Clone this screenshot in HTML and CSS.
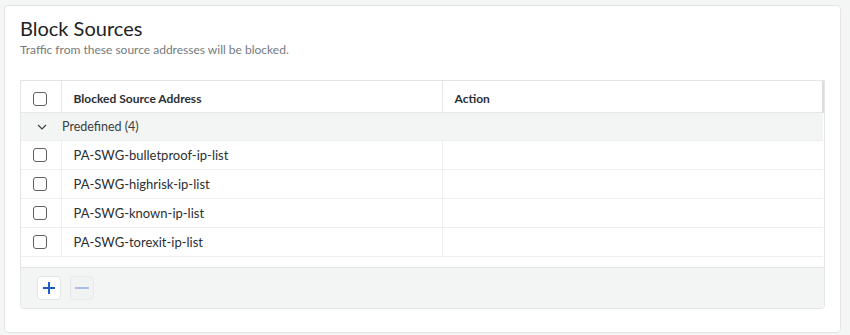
FILE: index.html
```html
<!DOCTYPE html>
<html lang="en">
<head>
  <meta charset="UTF-8" />
  <meta name="viewport" content="width=device-width, initial-scale=1.0"/>
  <title>Block Sources</title>
  <link rel="stylesheet" href="styles.css">
</head>
<body>
  <div class="card">
    <h2 class="title">Block Sources</h2>
    <div class="subtitle">Traffic from these source addresses will be blocked.</div>

    <div class="grid-wrap">
      <table class="grid">
        <colgroup>
          <col class="col-check">
          <col class="col-name">
          <col class="col-action">
        </colgroup>
        <thead>
          <tr>
            <th><span class="box"></span></th>
            <th>Blocked Source Address</th>
            <th>Action</th>
          </tr>
        </thead>
        <tbody>
          <tr class="group">
            <td class="chev">
              <svg width="10" height="6" viewBox="0 0 10 6"><path d="M1 1l4 4 4-4" fill="none" stroke="#3c4043" stroke-width="1.2"/></svg>
            </td>
            <td colspan="2" class="group-label">Predefined (4)</td>
          </tr>
          <tr>
            <td><span class="box"></span></td>
            <td class="name">PA-SWG-bulletproof-ip-list</td>
            <td></td>
          </tr>
          <tr>
            <td><span class="box"></span></td>
            <td class="name">PA-SWG-highrisk-ip-list</td>
            <td></td>
          </tr>
          <tr>
            <td><span class="box"></span></td>
            <td class="name">PA-SWG-known-ip-list</td>
            <td></td>
          </tr>
          <tr>
            <td><span class="box"></span></td>
            <td class="name">PA-SWG-torexit-ip-list</td>
            <td></td>
          </tr>
        </tbody>
      </table>
      <div class="spacer"></div>
      <div class="toolbar">
        <button class="btn add" title="Add">
          <svg width="12" height="12" viewBox="0 0 12 12"><path d="M6 0v12M0 6h12" stroke="#1f5ac8" stroke-width="2"/></svg>
        </button>
        <button class="btn remove" title="Remove" disabled>
          <svg width="14" height="12" viewBox="0 0 14 12"><path d="M0 6h14" stroke="#a9bde6" stroke-width="2"/></svg>
        </button>
      </div>
    </div>
  </div>
</body>
</html>
```

FILE: styles.css
```css
body {
  margin: 0;
  padding: 5px 9px 4px 4px;
  background: #f4f5f5;
  font-family: Lato, "Noto Sans", sans-serif;
  color: #333;
}

.card {
  background: #fff;
  border: 1px solid #e3e5e5;
  border-radius: 4px;
  padding: 10px 15px 23px 15px;
}

.title {
  margin: 0;
  font-size: 20px;
  line-height: 24px;
  font-weight: 400;
  color: #222;
}

.subtitle {
  margin-top: 2px;
  font-size: 12px;
  line-height: 16px;
  color: #767a7d;
}

.grid-wrap {
  margin-top: 22px;
  border: 1px solid #e3e5e5;
  border-radius: 0 0 4px 4px;
  overflow: hidden;
}

.grid {
  width: 100%;
  border-collapse: collapse;
  table-layout: fixed;
  font-size: 12px;
}

.col-check { width: 40px; }
.col-name { width: 381px; }

.grid th {
  text-align: left;
  font-weight: 700;
  color: #2b2f33;
  padding: 10px 12px 5px;
  line-height: 16px;
  border-bottom: 1px solid #e6e8e8;
  border-right: 1px solid #e6e8e8;
}

.grid th:last-child {
  border-right: 2px solid #dcdede;
}

.grid th:first-child,
.grid td:first-child {
  padding-left: 12px;
  padding-right: 0;
}

.grid td {
  height: 28px;
  padding: 0 12px;
  border-bottom: 1px solid #eef0f0;
  border-right: 1px solid #eef0f0;
  vertical-align: middle;
  line-height: 16px;
}

.grid td:last-child {
  border-right: none;
}

.grid .group td {
  background: #f3f4f4;
  border-right: none;
  height: 27px;
}

.chev svg {
  display: block;
  margin-left: 4px;
}

.grid .group-label {
  padding-left: 1px;
  font-size: 12.5px;
  color: #3a3e42;
}

.name {
  font-size: 13px;
  color: #2b2f33;
}

.box {
  display: block;
  width: 12px;
  height: 12px;
  border: 1px solid #5d6266;
  border-radius: 3px;
  background: #fff;
}

.spacer {
  height: 10px;
  border-bottom: 1px solid #e3e5e5;
}

.toolbar {
  background: #f3f4f4;
  display: flex;
  gap: 9px;
  padding: 8px 16px;
}

.btn {
  width: 24px;
  height: 24px;
  padding: 0;
  border: 1px solid #e3e5e5;
  border-radius: 4px;
  background: #fff;
  display: flex;
  align-items: center;
  justify-content: center;
}

.btn.remove {
  background: #f1f3f3;
  border-color: #e8eaea;
}
```
